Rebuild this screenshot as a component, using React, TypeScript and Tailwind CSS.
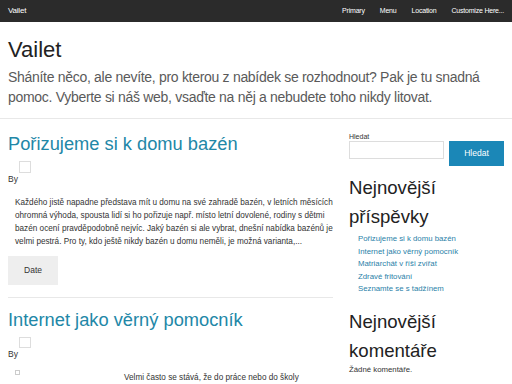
export default function App() {
  const recent = [
    'Pořizujeme si k domu bazén',
    'Internet jako věrný pomocník',
    'Matriarchát v říši zvířat',
    'Zdravé fritování',
    'Seznamte se s tadžínem',
  ];

  return (
    <div className="min-h-screen bg-white font-['Liberation_Sans',Arial,sans-serif] text-[#333]">
      {/* top bar */}
      <nav className="h-[22px] bg-[#2b2b2b] flex items-center justify-between px-2 text-white">
        <span className="text-[8px] tracking-[-0.2px]">Vailet</span>
        <ul className="flex gap-[15px] text-[7px] tracking-[-0.2px]">
          <li>Primary</li>
          <li>Menu</li>
          <li>Location</li>
          <li>Customize Here...</li>
        </ul>
      </nav>

      {/* site header */}
      <header className="px-2 pt-[14px] pb-[11px] border-b border-[#e8e8e8]">
        <h1 className="text-[22px] leading-[28px] text-[#222]">Vailet</h1>
        <p className="mt-[4px] text-[14px] leading-[19.5px] tracking-[-0.3px] text-[#5a5a5a]">
          Sháníte něco, ale nevíte, pro kterou z nabídek se rozhodnout? Pak je tu snadná pomoc. Vyberte si náš web,
          vsaďte na něj a nebudete toho nikdy litovat.
        </p>
      </header>

      <div className="flex pl-2 pr-2 gap-4">
        {/* main */}
        <main className="w-[325px] shrink-0">
          <article className="pt-[13px] pb-[12px] border-b border-[#e8e8e8]">
            <h2 className="text-[18.3px] leading-[24px] text-[#2287a7]">Pořizujeme si k domu bazén</h2>
            <div className="ml-[11px] mt-[5px] w-[12px] h-[12px] border border-[#ddd]" />
            <p className="text-[8.5px] leading-[12px]">By</p>
            <p className="mt-[10.5px] pl-[7px] text-[8.2px] leading-[13px] text-[#333]">
              Každého jistě napadne představa mít u domu na své zahradě bazén, v letních měsících ohromná výhoda,
              spousta lidí si ho pořizuje např. místo letní dovolené, rodiny s dětmi bazén ocení pravděpodobně nejvíc.
              Jaký bazén si ale vybrat, dnešní nabídka bazénů je velmi pestrá. Pro ty, kdo ještě nikdy bazén u domu
              neměli, je možná varianta,...
            </p>
            <button className="mt-[8.5px] w-[50px] h-[29px] bg-[#eee] text-[8.5px] text-[#333]">Date</button>
          </article>

          <article className="pt-[10px]">
            <h2 className="text-[18.3px] leading-[24px] text-[#2287a7]">Internet jako věrný pomocník</h2>
            <div className="ml-[11px] mt-[5px] w-[12px] h-[11px] border border-[#ddd]" />
            <p className="text-[8.5px] leading-[12px]">By</p>
            <div className="mt-[10px] flex items-start">
              <div className="ml-[7px] w-[5px] h-[5px] border border-[#ccc]" />
              <p className="ml-[104px] mt-[1px] text-[8.2px] leading-[13px]">
                Velmi často se stává, že do práce nebo do školy
              </p>
            </div>
          </article>
        </main>

        {/* sidebar */}
        <aside className="flex-1 pt-[12.5px]">
          <label className="block text-[7px] leading-[9px] text-[#333]">Hledat</label>
          <div className="mt-[0.5px] flex gap-[5px] items-start">
            <input className="w-[95px] h-[18px] border border-[#ddd] bg-white" />
            <button className="w-[55px] h-[25px] bg-[#1b87b7] text-white text-[8.5px]">Hledat</button>
          </div>

          <h3 className="mt-[6.5px] text-[18.6px] leading-[29px] text-[#222]">Nejnovější příspěvky</h3>
          <ul className="mt-[2.5px] pl-[9px] text-[7.8px] leading-[12.5px] text-[#2a7fa8]">
            {recent.map((r) => (
              <li key={r}>{r}</li>
            ))}
          </ul>

          <h3 className="mt-[11px] text-[18.6px] leading-[29px] text-[#222]">Nejnovější komentáře</h3>
          <p className="mt-[0.5px] text-[7.8px] leading-[10px]">Žádné komentáře.</p>
        </aside>
      </div>
    </div>
  );
}
